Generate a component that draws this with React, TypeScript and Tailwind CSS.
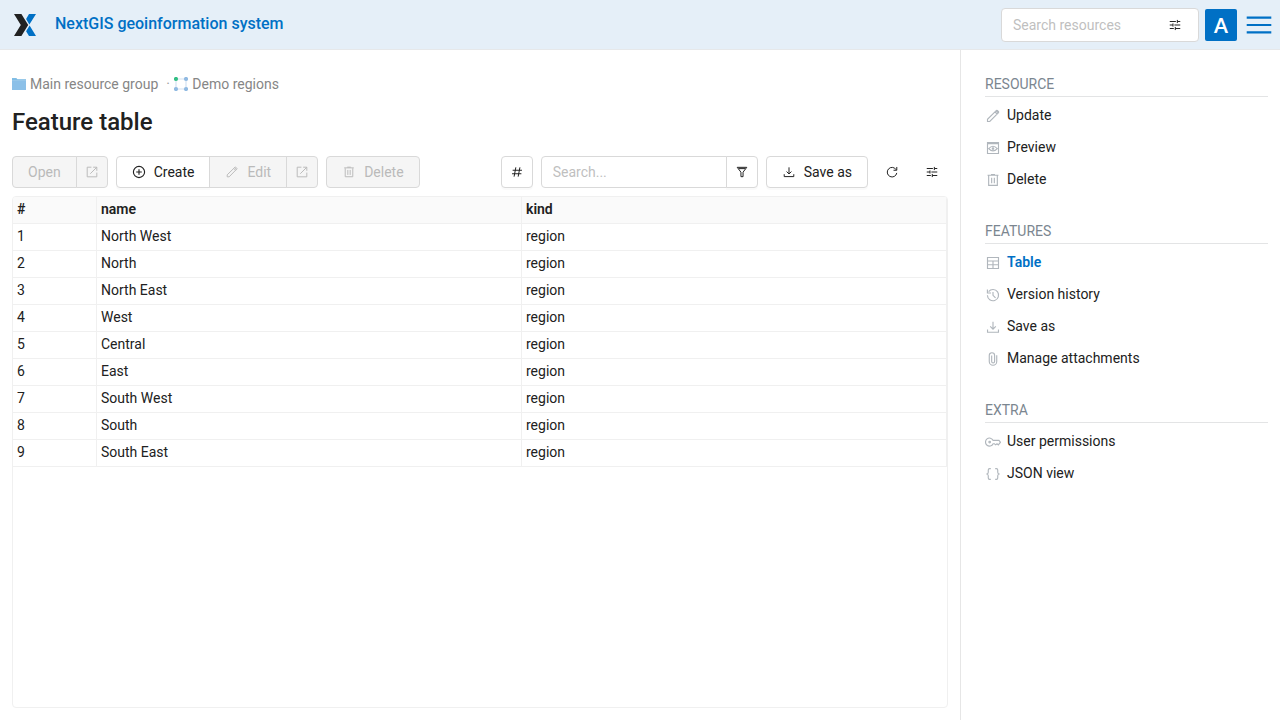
import type { ReactNode } from "react";

type IconName =
  | "tune" | "open" | "plus" | "edit" | "delete" | "hash" | "filter" | "save"
  | "refresh" | "preview" | "table" | "history" | "attach" | "key" | "json";

const drawings: Record<IconName, ReactNode> = {
  tune: <path d="M3 6h10.5M16 6h5M16 3.3v5.4M3 12h5.5M8.5 9.3v5.4M11 12h10M3 18h7M12.5 15.3v5.4M12.5 18H21" />,
  open: <path d="M11 3.75H3.75v16.5h16.5V13M14 3.75h6.25V10M20.25 3.75L9 15" />,
  plus: <path d="M12 7.8v8.4M7.8 12h8.4M12 3.6a8.4 8.4 0 1 0 0 16.8a8.4 8.4 0 1 0 0-16.8z" />,
  edit: <path d="M3.75 20.25v-3.4L17.2 3.7q.6-.5 1.2 0l1.9 1.9q.5.6 0 1.2L7.15 20.25zM15 5.9l3.1 3.1M16.6 4.3l3.1 3.1" />,
  delete: <path d="M5.5 5.5v14.6h13V5.5M3.8 4.9h16.4M9 3.7h6M10 8.5v8.5M14 8.5v8.5" />,
  hash: <path d="M10 4L7 20M17 4l-3 16M4.5 9h16M3.5 15h16" />,
  filter: <path d="M3.8 4h16.4L13.8 12.3V20h-3.6V12.3zM6.3 6.2h11.4" />,
  save: <path d="M12 4v11.2M7.8 11.2l4.2 4.2 4.2-4.2M3.8 15.8v4.1h16.4v-4.1" />,
  refresh: <path d="M19.2 8.2A8.2 8.2 0 1 0 20.2 13.6M20.2 3.4v5.6h-5.6" />,
  preview: (
    <>
      <path d="M3.75 3.75h16.5v16.5H3.75zM3.75 5.4h16.5M5.6 12.9q6.4-7 12.8 0q-6.4 7-12.8 0z" />
      <circle cx="12" cy="12.9" r="1.1" />
    </>
  ),
  table: <path d="M3.75 3.75h16.5v16.5H3.75zM3.75 9h16.5M3.75 14.6h16.5M12 9v11.25" />,
  history: <path d="M3.6 12.5A8.4 8.4 0 1 0 5.4 7M3.6 3.8v5.2h5.4M12 7.5v5l3.8 3.8" />,
  attach: <path d="M17.6 6.5v9.2a5.6 5.6 0 0 1-11.2 0V6.6a4 4 0 0 1 8 0v9a2.2 2.2 0 0 1-4.4 0V6.8" />,
  key: (
    <>
      <path d="M12.2 9.6A6 6 0 1 0 12.2 14.6h2l1.8 1.7 2-1.6 2 1.6 3.2-4-2.3-2.7z" />
      <circle cx="7" cy="12.1" r="1.2" />
    </>
  ),
  json: <path d="M8.7 4H6.9q-2 0-2 2v3.2q0 2.6-2.8 2.8q2.8.2 2.8 2.8V18q0 2 2 2h1.8M15.3 4h1.8q2 0 2 2v3.2q0 2.6 2.8 2.8q-2.8.2-2.8 2.8V18q0 2-2 2h-1.8" />,
};

const iconFrames = {
  small: { box: "0 0 24 24", size: "size-3.5 shrink-0" },
  medium: { box: "1.5 1.5 21 21", size: "size-3.5 shrink-0" },
  large: { box: "0 0 24 24", size: "size-4 shrink-0" },
};

function Icon({ name, size = "small" }: { name: IconName; size?: keyof typeof iconFrames }) {
  const frame = iconFrames[size];
  return (
    <svg
      aria-hidden="true"
      viewBox={frame.box}
      className={frame.size}
      fill="none"
      stroke="currentColor"
      strokeWidth={1.7}
    >
      {drawings[name]}
    </svg>
  );
}

const base = "flex h-8 items-center justify-center gap-2 border border-[#d9d9d9] ";
const active = base + "bg-white text-[#212121] shadow-[0_2px_0_rgba(0,0,0,0.02)]";
const disabled = base + "bg-[#f5f5f5] text-[#bababa]";

function Header() {
  return (
    <header className="flex h-[50px] shrink-0 items-center border-b border-[#e6e8ea] bg-[#e5eff8] pr-2 pl-3">
      <a href="#home" className="flex items-center gap-[17px] text-base font-medium text-[#0070c5]">
        <svg aria-hidden="true" viewBox="0 0 26 26" className="size-[26px]">
          <path fill="#212121" d="M2 2h7.4l6.8 11-6.8 11H2l6.8-11z" />
          <path fill="#0070c5" d="M17 2h7l-6.6 10.6-3.3-5.6zM17.6 13.6L24 24h-7l-2.9-4.7z" />
        </svg>
        <span className="pb-px">NextGIS geoinformation system</span>
      </a>
      <div className="ml-auto flex h-[34px] w-[198px] items-center rounded border border-[#d9d9d9] bg-white pr-4 pl-[11px]">
        <input
          aria-label="Search resources"
          placeholder="Search resources"
          className="min-w-0 flex-1 text-sm outline-none placeholder:text-[#bfbfbf]"
        />
        <button type="button" aria-label="Search options" className="text-[#212121]">
          <Icon name="tune" />
        </button>
      </div>
      <button type="button" aria-label="Account" className="ml-1.5 flex size-8 items-center justify-center rounded-xs bg-[#0070c5] text-white">
        <span className="font-[Lato,sans-serif] text-xl font-bold">A</span>
      </button>
      <button type="button" aria-label="Menu" className="ml-[9px] text-[#0070c5]">
        <svg aria-hidden="true" viewBox="0 0 26 18" className="h-[18px] w-[26px]" stroke="currentColor" strokeWidth="2.2">
          <path d="M.7 1.7h24.6M.7 9h24.6M.7 16.3h24.6" />
        </svg>
      </button>
    </header>
  );
}

function Breadcrumb() {
  return (
    <nav aria-label="Breadcrumb" className="flex h-[22px] items-center text-[#868686]">
      <a href="#main" className="flex items-center gap-1">
        <svg aria-hidden="true" viewBox="0 0 14 14" className="size-3.5">
          <path fill="#5aa9dd" d="M0 1.2h4.4l1 1H14V5H0z" />
          <path fill="#8cc0e8" d="M0 3.2h14V13H0z" />
          <path fill="#b9d9f1" d="M0 2.6h14v.8H0z" />
        </svg>
        Main resource group
      </a>
      <span className="w-4 pl-2 text-[#a0a0a0]">·</span>
      <a href="#demo" className="flex items-center gap-1">
        <svg aria-hidden="true" viewBox="0 0 14 14" className="size-3.5">
          <path d="M2 2h10v10H2z" fill="none" stroke="#d3e1f2" strokeWidth="1.2" />
          <circle cx="2" cy="2" r="2.1" fill="#32bf84" />
          <circle cx="12" cy="2" r="2.1" fill="#91bae2" />
          <circle cx="2" cy="12" r="2.1" fill="#91bae2" />
          <circle cx="12" cy="12" r="2.1" fill="#91bae2" />
        </svg>
        Demo regions
      </a>
    </nav>
  );
}

function Toolbar() {
  return (
    <div className="mt-[18px] flex items-center gap-2">
      <div className="flex">
        <button type="button" disabled className={disabled + " rounded-l px-[15px]"}>Open</button>
        <button type="button" disabled aria-label="Open in new tab" className={disabled + " -ml-px w-8 rounded-r"}><Icon name="open" /></button>
      </div>
      <div className="flex">
        <button type="button" className={active + " rounded-l px-[15px]"}><Icon name="plus" size="medium" />Create</button>
        <button type="button" disabled className={disabled + " -ml-px px-[15px]"}><Icon name="edit" />Edit</button>
        <button type="button" disabled aria-label="Edit in new tab" className={disabled + " -ml-px w-8 rounded-r"}><Icon name="open" /></button>
      </div>
      <button type="button" disabled className={disabled + " rounded px-[15px]"}><Icon name="delete" />Delete</button>
      <button type="button" aria-label="Go to feature" className={active + " ml-auto w-8 rounded"}><Icon name="hash" /></button>
      <div className="flex">
        <input
          aria-label="Search features"
          placeholder="Search..."
          className="h-8 w-[186px] rounded-l border border-[#d9d9d9] px-[11px] outline-none placeholder:text-[#bfbfbf]"
        />
        <button type="button" aria-label="Filter" className={active + " -ml-px w-8 rounded-r"}><Icon name="filter" /></button>
      </div>
      <button type="button" className={active + " rounded px-[15px]"}><Icon name="save" />Save as</button>
      <button type="button" aria-label="Refresh" className="flex size-8 items-center justify-center"><Icon name="refresh" /></button>
      <button type="button" aria-label="Table settings" className="flex size-8 items-center justify-center"><Icon name="tune" /></button>
    </div>
  );
}

const regions = ["North West", "North", "North East", "West", "Central", "East", "South West", "South", "South East"];
const cell = "h-[27px] border-r border-b border-[#f0f0f0] px-1 pb-0.5 text-left leading-5";

function FeatureTable() {
  return (
    <div className="mt-2 flex-1 overflow-hidden rounded border border-[#f0f0f0]">
      <table className="w-full table-fixed border-separate border-spacing-0">
        <colgroup>
          <col className="w-[84px]" />
          <col />
          <col />
        </colgroup>
        <thead className="bg-[#fafafa]">
          <tr>
            <th scope="col" className={cell + " font-semibold"}>#</th>
            <th scope="col" className={cell + " font-semibold"}>name</th>
            <th scope="col" className={cell + " font-semibold"}>kind</th>
          </tr>
        </thead>
        <tbody>
          {regions.map((name, i) => (
            <tr key={name}>
              <td className={cell}>{i + 1}</td>
              <td className={cell}>{name}</td>
              <td className={cell}>region</td>
            </tr>
          ))}
        </tbody>
      </table>
    </div>
  );
}

const sections: { title: string; items: { icon: IconName; label: string; current?: boolean }[] }[] = [
  {
    title: "RESOURCE",
    items: [
      { icon: "edit", label: "Update" },
      { icon: "preview", label: "Preview" },
      { icon: "delete", label: "Delete" },
    ],
  },
  {
    title: "FEATURES",
    items: [
      { icon: "table", label: "Table", current: true },
      { icon: "history", label: "Version history" },
      { icon: "save", label: "Save as" },
      { icon: "attach", label: "Manage attachments" },
    ],
  },
  {
    title: "EXTRA",
    items: [
      { icon: "key", label: "User permissions" },
      { icon: "json", label: "JSON view" },
    ],
  },
];

function Sidebar() {
  return (
    <aside className="flex w-80 shrink-0 flex-col gap-6 border-l border-[#e6e6e6] pt-6 pr-3 pl-6">
      {sections.map((section) => (
        <section key={section.title}>
          <h2 className="h-[23px] border-b border-[#e3e4e5] leading-5 text-[#7b8690]">{section.title}</h2>
          <ul className="mt-0.5 pb-0.5">
            {section.items.map((item) => (
              <li key={item.label}>
                <a
                  href={"#" + item.icon}
                  className={item.current ? "flex h-8 items-center gap-1.5 font-semibold text-[#0070c5]" : "flex h-8 items-center gap-1.5"}
                >
                  <span className="pt-0.5 text-[#b0b6bc]"><Icon name={item.icon} size="large" /></span>
                  {item.label}
                </a>
              </li>
            ))}
          </ul>
        </section>
      ))}
    </aside>
  );
}

export default function App() {
  return (
    <div className="flex min-h-screen flex-col bg-white font-[Roboto,sans-serif] text-sm text-[#212121]">
      <Header />
      <div className="flex flex-1">
        <main className="flex min-w-0 flex-1 flex-col px-3 pt-[23px] pb-3">
          <Breadcrumb />
          <h1 className="mt-[11px] text-2xl font-medium">Feature table</h1>
          <Toolbar />
          <FeatureTable />
        </main>
        <Sidebar />
      </div>
    </div>
  );
}
